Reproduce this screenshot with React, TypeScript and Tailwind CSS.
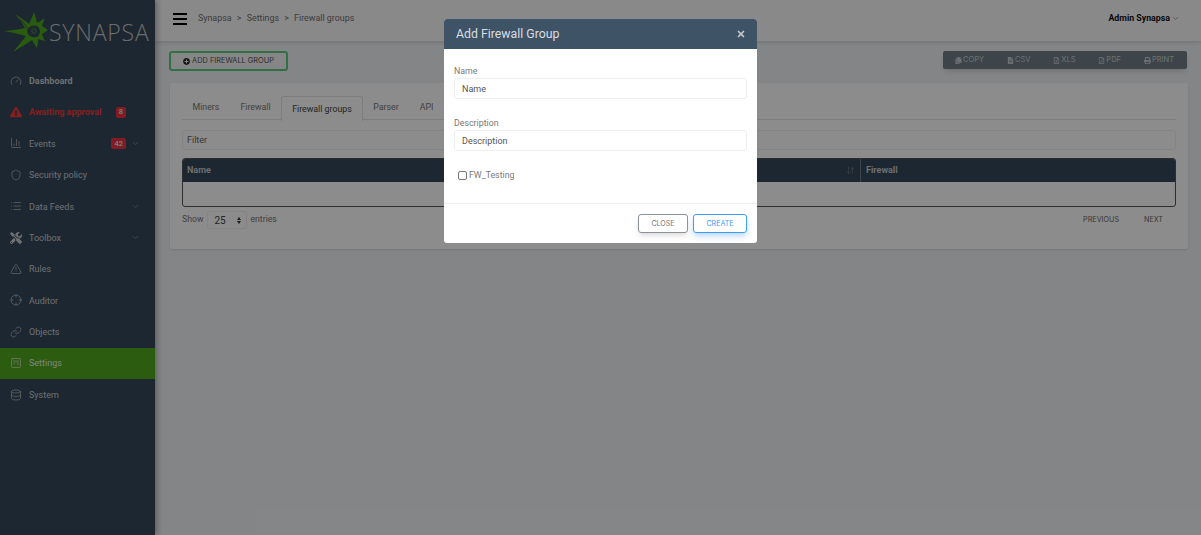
import React from 'react';
import {
  Gauge,
  TriangleAlert,
  ChartColumn,
  Shield,
  List,
  Crosshair,
  Link,
  SquareKanban,
  Database,
  ChevronDown,
  ArrowDownUp,
  X,
} from 'lucide-react';
import {
  FaTools,
  FaPlusCircle,
  FaCopy,
  FaFileAlt,
  FaRegFileExcel,
  FaRegFilePdf,
  FaPrint,
  FaExclamationTriangle,
} from 'react-icons/fa';

const navItems = [
  { label: 'Dashboard', icon: Gauge, bold: true },
  { label: 'Awaiting approval', icon: FaExclamationTriangle, danger: true, badge: '8' },
  { label: 'Events', icon: ChartColumn, badge: '42', chevron: true },
  { label: 'Security policy', icon: Shield },
  { label: 'Data Feeds', icon: List, chevron: true },
  { label: 'Toolbox', icon: FaTools, chevron: true },
  { label: 'Rules', icon: TriangleAlert },
  { label: 'Auditor', icon: Crosshair },
  { label: 'Objects', icon: Link },
  { label: 'Settings', icon: SquareKanban, active: true },
  { label: 'System', icon: Database },
];

const tabs = ['Miners', 'Firewall', 'Firewall groups', 'Parser', 'API'];

const exportButtons = [
  { label: 'COPY', icon: FaCopy },
  { label: 'CSV', icon: FaFileAlt },
  { label: 'XLS', icon: FaRegFileExcel },
  { label: 'PDF', icon: FaRegFilePdf },
  { label: 'PRINT', icon: FaPrint },
];

function Logo() {
  return (
    <div className="flex h-[65px] items-center pl-[3px]">
      <svg width="46" height="46" viewBox="0 0 46 46" className="shrink-0" fill="none">
        <path
          d="M1 21 Q14 20 22 18 Q18 10 12 4 Q20 9 26 14 Q29 8 31 2 Q33 8 34 13 Q38 11 42 8 Q40 12 39 16 Q42 18 45 20 Q42 22 39 24 Q40 28 42 31 Q38 30 35 29 Q35 34 34 38 Q31 34 29 30 Q20 36 10 42 Q17 34 23 26 Q13 23 1 21 Z"
          fill="#4ea81c"
        />
        <path
          d="M24 20 Q26 17 28 16 Q31 15 34 16 Q37 18 37 21 Q37 25 34 27 Q30 28 27 26 Q24 24 24 20 Z"
          fill="#344859"
        />
        <path d="M5 24 Q14 25 21 29 M17 9 Q22 14 25 19" stroke="#344859" strokeWidth="0.8" />
        <circle cx="31" cy="21" r="2.2" stroke="#4ea81c" strokeWidth="0.8" />
      </svg>
      <span className="font-['Open_Sans',sans-serif] text-[23px] font-light leading-none tracking-[0.8px] text-[#c4c4c4]">
        SYNAPSA
      </span>
    </div>
  );
}

function Sidebar() {
  return (
    <aside className="z-10 h-full w-[155px] shrink-0 bg-[#344859] shadow-[2px_0_6px_rgba(0,0,0,0.3)]">
      <Logo />
      <nav>
        {navItems.map((item) => {
          const Icon = item.icon;
          return (
            <div
              key={item.label}
              className={`flex h-[31.4px] items-center pl-[10px] pr-[15px] text-[9px] ${
                item.active ? 'bg-[#4fa81c] text-[#e8efe0]' : ''
              } ${item.danger ? 'font-bold text-[#f03a3a]' : ''} ${!item.active && !item.danger ? 'text-[#c8ccd0]' : ''} ${
                item.bold ? 'font-bold' : ''
              }`}
            >
              <Icon className="mr-[7px] h-[12px] w-[12px] shrink-0" strokeWidth={1.25} />
              <span className="whitespace-nowrap pt-[2px]">{item.label}</span>
              <span className="ml-auto flex items-center gap-[5px]">
                {item.badge && (
                  <span className="flex h-[11px] items-center rounded-[2px] bg-[#f03040] px-[3px] text-[7.5px] font-bold text-[#d8d8d8]">
                    {item.badge}
                  </span>
                )}
                {item.chevron ? (
                  <ChevronDown className="h-[9px] w-[9px] text-[#8a9098]" />
                ) : (
                  item.badge && <span className="w-[9px]" />
                )}
              </span>
            </div>
          );
        })}
      </nav>
    </aside>
  );
}

function TopBar() {
  return (
    <header className="flex h-[41px] items-center bg-[#fafafa] pb-[4px] pl-[18px] pr-[21px] shadow-[0_2px_4px_rgba(0,0,0,0.12)]">
      <div className="mr-[11px] flex w-[14px] flex-col gap-[3px]">
        <span className="h-[2px] bg-black" />
        <span className="h-[2px] bg-black" />
        <span className="h-[2px] bg-black" />
      </div>
      <div className="text-[8.9px] text-[#707070]">
        Synapsa <span className="mx-[3px]">&gt;</span> Settings <span className="mx-[3px]">&gt;</span> Firewall groups
      </div>
      <div className="ml-auto flex items-center gap-[1px] text-[8.8px] font-bold text-[#111]">
        Admin Synapsa
        <ChevronDown className="h-[9px] w-[9px] text-[#888]" />
      </div>
    </header>
  );
}

function Toolbar() {
  return (
    <div className="flex h-[42px] items-start justify-between pl-[14px] pr-[14px] pt-[10px]">
      <button className="flex h-[20px] w-[119px] items-center justify-center gap-[2px] rounded-[3px] border-2 border-[#5ecb80] bg-[#f4f4f4] font-['Inter',sans-serif] text-[7.4px] text-[#555]">
        <FaPlusCircle className="h-[7px] w-[7px] text-[#222]" />
        ADD FIREWALL GROUP
      </button>
      <div className="flex h-[18px] w-[244px] items-center justify-between rounded-[2px] bg-[#6f7f88] pl-[12px] pr-[13px] font-['Inter',sans-serif] text-[7.5px] text-[#c8cdd0] shadow-md">
        {exportButtons.map((b) => {
          const Icon = b.icon;
          return (
            <span key={b.label} className="flex items-center gap-[1px]">
              <Icon className="h-[7px] w-[7px]" />
              {b.label}
            </span>
          );
        })}
      </div>
    </div>
  );
}

function GroupsCard() {
  return (
    <section className="ml-[15px] mr-[13px] h-[166px] rounded-[2px] bg-white px-[12px] pt-[13px] shadow-sm">
      <div className="flex h-[24px] border-b border-[#e3e3e3] text-[8.8px] text-[#777]">
        {tabs.map((tab) =>
          tab === 'Firewall groups' ? (
            <span
              key={tab}
              className="-mb-px flex h-[25px] items-center rounded-t-[3px] border border-b-0 border-[#e3e3e3] bg-white px-[10px] pt-[1px] text-[#444]"
            >
              {tab}
            </span>
          ) : (
            <span key={tab} className="flex items-center px-[10.5px] pt-[1px]">
              {tab}
            </span>
          )
        )}
      </div>
      <div className="mt-[10px] flex h-[20px] items-center rounded-[3px] border border-[#eeeeee] pl-[4px] pt-[1px] text-[9px] text-[#666]">
        Filter
      </div>
      <div className="mt-[8px] h-[49px] overflow-hidden rounded-[3px] border border-[#555]">
        <div className="flex h-[23px] items-center bg-[#344859] text-[9px] font-bold text-[#c5c8cb]">
          <div className="flex h-full w-[677px] items-center justify-between pl-[4px] pr-[5px]">
            Name
            <ArrowDownUp className="h-[9px] w-[9px] text-[#6d7a86]" />
          </div>
          <div className="flex h-full items-center border-l border-[#6d7a86] pl-[5px]">Firewall</div>
        </div>
      </div>
      <div className="flex h-[24px] items-center pt-[1px] text-[8.7px] text-[#777]">
        Show
        <span className="ml-[4px] mr-[3px] mt-[1px] flex h-[18px] w-[40px] items-center justify-between rounded-[3px] border border-[#eeeeee] pl-[6px] pr-[5px] text-[10px] text-[#444]">
          25
          <span className="flex flex-col gap-[1px]">
            <span className="h-0 w-0 border-x-[2.5px] border-b-[3px] border-x-transparent border-b-[#333]" />
            <span className="h-0 w-0 border-x-[2.5px] border-t-[3px] border-x-transparent border-t-[#333]" />
          </span>
        </span>
        entries
        <span className="ml-auto mr-[13px] mt-[1px] flex gap-[25px] font-['Inter',sans-serif] text-[7.2px] text-[#666]">
          <span>PREVIOUS</span>
          <span>NEXT</span>
        </span>
      </div>
    </section>
  );
}

function AddGroupModal() {
  return (
    <div className="absolute left-[444px] top-[19px] z-30 h-[224px] w-[313px] overflow-hidden rounded-[3px] bg-white font-['Roboto',sans-serif]">
      <div className="flex h-[30px] items-center justify-between bg-[#3f5366] pl-[12px] pr-[11px] text-[12.3px] text-[#d9dee3]">
        Add Firewall Group
        <X className="h-[10px] w-[10px] text-[#c5cbd1]" strokeWidth={4} />
      </div>
      <div className="h-[155px] border-b border-[#eeeeee] px-[10px] pt-[16px] text-[8.8px] text-[#7a7a7a]">
        <label className="mb-[1px] block leading-[12px]">Name</label>
        <input
          placeholder="Name"
          className="block h-[21px] w-full rounded-[3px] border border-[#eeeeee] pl-[7px] text-[9px] placeholder:text-[#555]"
        />
        <label className="mb-[1px] mt-[18px] block leading-[12px]">Description</label>
        <input
          placeholder="Description"
          className="block h-[21px] w-full rounded-[3px] border border-[#eeeeee] pl-[7px] text-[9px] placeholder:text-[#555]"
        />
        <div className="mt-[18px] flex items-center pl-[4px]">
          <span className="mr-[2px] h-[9px] w-[9px] rounded-[2px] border border-[#777]" />
          FW_Testing
        </div>
      </div>
      <div className="flex justify-end gap-[5px] pr-[10px] pt-[10px] font-['Inter',sans-serif] text-[7.1px]">
        <button className="h-[19px] w-[50px] rounded-[3px] border border-[#8d9296] pt-[1px] text-[#777] shadow-md">
          CLOSE
        </button>
        <button className="h-[19px] w-[54px] rounded-[3px] border border-[#3d9df0] pt-[1px] text-[#3d9df0] shadow-md shadow-blue-200">
          CREATE
        </button>
      </div>
    </div>
  );
}

export default function App() {
  return (
    <div className="relative flex h-[535px] w-[1201px] overflow-hidden bg-[#f1f3f6] font-['Roboto',sans-serif]">
      <Sidebar />
      <main className="flex-1">
        <TopBar />
        <Toolbar />
        <GroupsCard />
      </main>
      <div className="absolute inset-0 z-20 bg-black/45" />
      <AddGroupModal />
    </div>
  );
}
